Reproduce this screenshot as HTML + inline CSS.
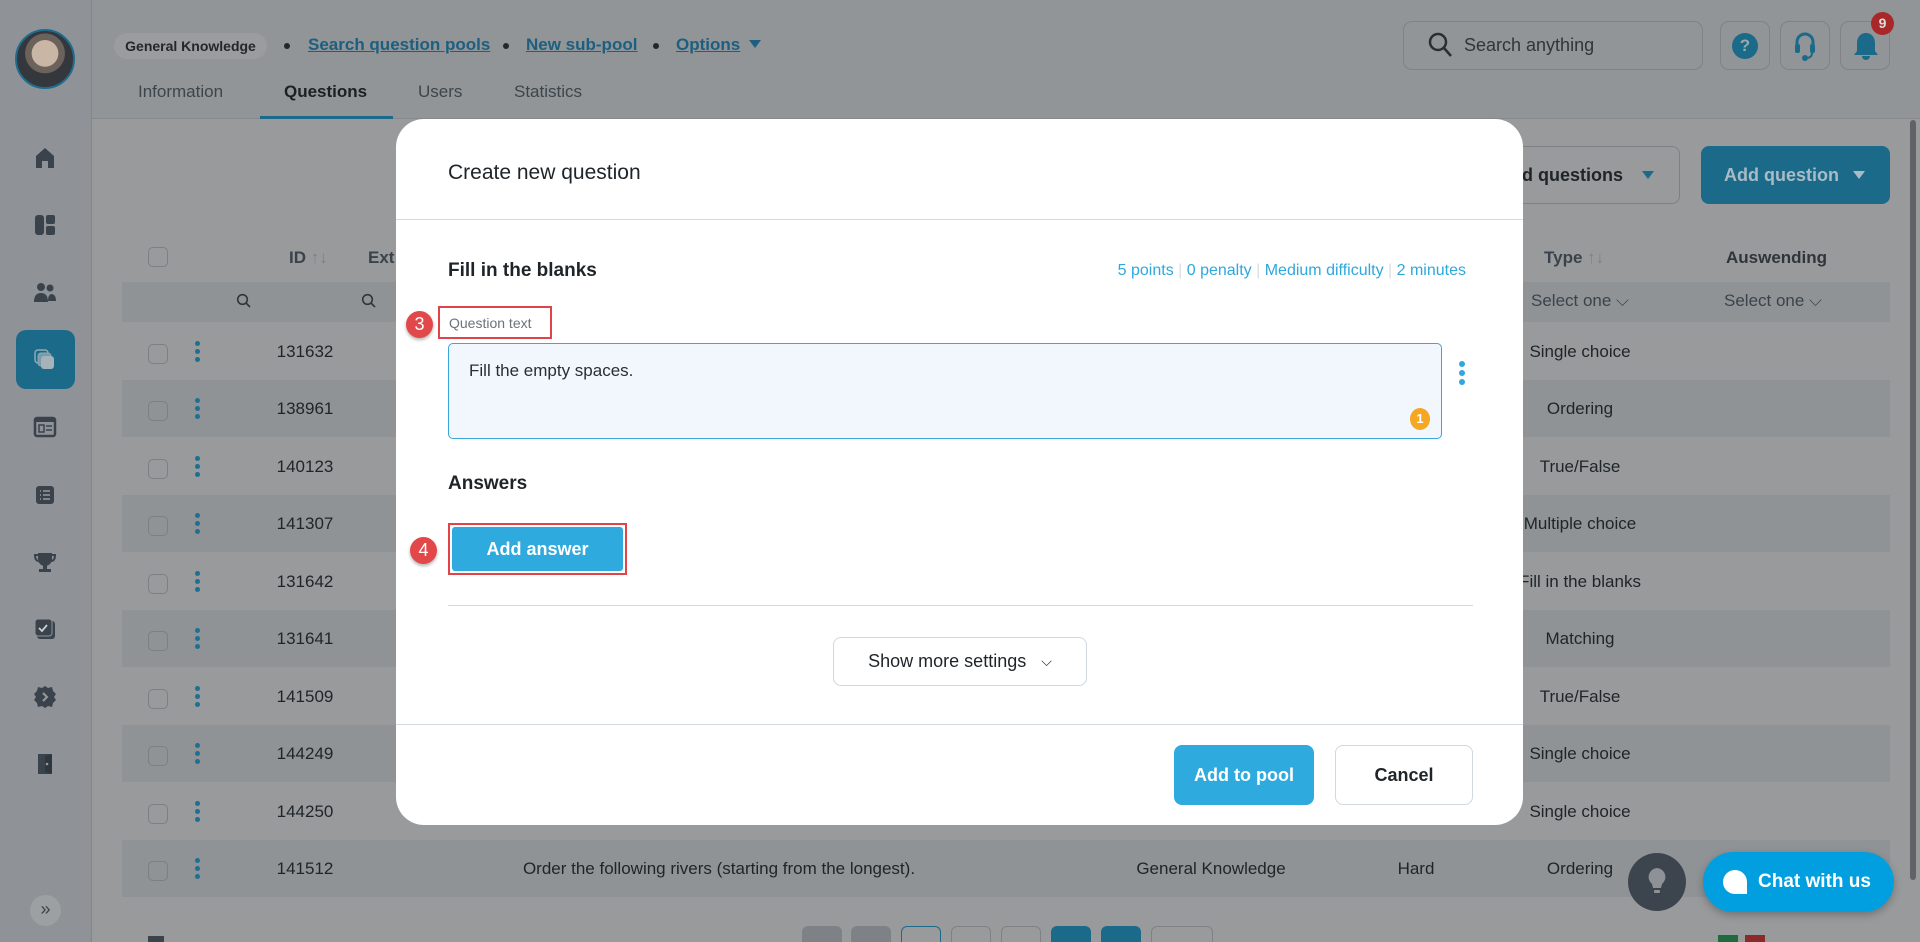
<!DOCTYPE html>
<html style="width:1920px;height:942px;overflow:hidden"><head><meta charset="utf-8">
<style>
*{box-sizing:border-box;margin:0;padding:0}
html,body{width:1920px;height:942px;overflow:hidden}
body{position:relative;background:#999a9b;font-family:"Liberation Sans",sans-serif;color:#1f2329}
.abs{position:absolute}
.hdr{left:0;top:0;width:1920px;height:119px;background:#919597;border-bottom:1px solid #85898c}
.side{left:0;top:0;width:92px;height:942px;background:#8f9397;border-right:1px solid #82868a}
.link{color:#1c5f80;text-decoration:underline;font-size:17px;font-weight:bold;top:35px}
.dot{width:6px;height:6px;border-radius:50%;background:#22272c;top:43px}
.tab{top:82px;font-size:17px;color:#3d454c}
.ib{width:50px;height:49px;border:1px solid #7f8388;border-radius:9px;top:21px}
.row{left:122px;width:1768px;height:57.5px}
.stripe{background:#8f9396}
.cb{width:20px;height:20px;border:1.5px solid #7b8085;border-radius:5px;left:148px}
.kb{left:195px;width:5px}
.kb i{display:block;width:5px;height:5px;border-radius:50%;background:#1d6f93;margin-bottom:3px}
.cell{font-size:17px;color:#1f2428;transform:translateX(-50%);white-space:nowrap}
.sic{left:33px;width:24px;height:24px}
.modal{left:396px;top:119px;width:1127px;height:706px;background:#fff;border-radius:28px}
.btn{border-radius:8px;font-size:18px;display:flex;align-items:center;justify-content:center}
.num{width:27px;height:27px;border-radius:50%;background:#e2474a;color:#fff;font-size:18px;display:flex;align-items:center;justify-content:center;box-shadow:0 2px 3px rgba(0,0,0,.3)}
.pg{top:926px;width:40px;height:16px;border-radius:6px 6px 0 0}
</style></head><body>
<div class="abs hdr"></div>
<div class="abs side"></div>

<div class="abs" style="left:15px;top:29px;width:60px;height:60px;border-radius:50%;border:2px solid #1f6d8e;background:radial-gradient(circle at 50% 40%,#c9b6a5 0 30%,#6b625c 31% 45%,#34383d 46%);"></div>

<div class="abs" style="left:114px;top:33px;width:153px;height:26px;border-radius:13px;background:#9a9c9e;font-size:14px;font-weight:bold;color:#22272b;display:flex;align-items:center;justify-content:center">General Knowledge</div>
<div class="abs dot" style="left:284px"></div>
<div class="abs link" style="left:308px">Search question pools</div>
<div class="abs dot" style="left:503px"></div>
<div class="abs link" style="left:526px">New sub-pool</div>
<div class="abs dot" style="left:653px"></div>
<div class="abs link" style="left:676px">Options</div>
<svg class="abs" style="left:749px;top:40px" width="12" height="9"><path d="M0 0h12L6 8z" fill="#1c5f80"/></svg>

<div class="abs tab" style="left:138px">Information</div>
<div class="abs tab" style="left:284px;color:#1b2025;font-weight:bold">Questions</div>
<div class="abs tab" style="left:418px">Users</div>
<div class="abs tab" style="left:514px">Statistics</div>
<div class="abs" style="left:260px;top:116px;width:133px;height:3px;background:#1b6a8a"></div>

<div class="abs" style="left:1403px;top:21px;width:300px;height:49px;border:1px solid #7f8388;border-radius:9px"></div>
<svg class="abs" style="left:1428px;top:32px" width="26" height="28"><circle cx="10" cy="10" r="8" fill="none" stroke="#2a2f34" stroke-width="2.5"/><path d="M16 16l7 8" stroke="#2a2f34" stroke-width="2.5"/></svg>
<div class="abs" style="left:1464px;top:35px;font-size:18px;color:#2f353a">Search anything</div>
<div class="abs ib" style="left:1720px"></div>
<div class="abs ib" style="left:1780px"></div>
<div class="abs ib" style="left:1840px"></div>
<div class="abs" style="left:1732px;top:33px;width:26px;height:26px;border-radius:50%;background:#1b6a8a;color:#9aa;font-weight:bold;font-size:17px;text-align:center;line-height:26px">?</div>
<svg class="abs" style="left:1793px;top:30px" width="24" height="32"><path d="M4 16v-4a8 8 0 0 1 16 0v4" fill="none" stroke="#1b6a8a" stroke-width="3"/><rect x="2" y="14" width="5" height="9" rx="2" fill="#1b6a8a"/><rect x="17" y="14" width="5" height="9" rx="2" fill="#1b6a8a"/><path d="M19 23q0 5-6 5" fill="none" stroke="#1b6a8a" stroke-width="2"/><circle cx="12" cy="28" r="3" fill="#1b6a8a"/></svg>
<svg class="abs" style="left:1853px;top:31px" width="26" height="30"><path d="M13 2c-6 0-9 5-9 10v8l-3 4h24l-3-4v-8c0-5-3-10-9-10z" fill="#1b6a8a"/><path d="M9 25a4 4 0 0 0 8 0z" fill="#1b6a8a"/></svg>
<div class="abs" style="left:1871px;top:12px;width:23px;height:23px;border-radius:50%;background:#a8282a;color:#ddd;font-size:14px;font-weight:bold;text-align:center;line-height:23px">9</div>

<svg class="abs sic" style="top:146px"><path d="M3 22V10l9-8 9 8v12h-6v-7h-6v7z" fill="#3a434c"/></svg>
<svg class="abs sic" style="top:213px"><rect x="2" y="2" width="9" height="20" rx="3" fill="#3a434c"/><rect x="13" y="2" width="9" height="9" rx="2" fill="#3a434c"/><rect x="13" y="13" width="9" height="9" rx="2" fill="#3a434c"/></svg>
<svg class="abs sic" style="top:281px"><circle cx="8" cy="6" r="4" fill="#3a434c"/><circle cx="17" cy="7" r="3.5" fill="#3a434c"/><path d="M1 21q0-9 7-9t7 9z" fill="#3a434c"/><path d="M15 20q0-6 3-7 5 0 5 7z" fill="#3a434c"/></svg>
<div class="abs" style="left:16px;top:330px;width:59px;height:59px;border-radius:10px;background:#1c6a8a"></div>
<svg class="abs sic" style="top:348px"><rect x="2" y="2" width="13" height="13" rx="3" fill="none" stroke="#8fa9b5" stroke-width="1.5"/><rect x="5" y="5" width="13" height="13" rx="3" fill="#7d9aa8" stroke="#8fa9b5"/><rect x="8" y="8" width="13" height="13" rx="3" fill="#a6b3ba"/></svg>
<svg class="abs sic" style="top:415px"><rect x="2" y="3" width="20" height="18" rx="2" fill="none" stroke="#3a434c" stroke-width="2.5"/><rect x="2" y="3" width="20" height="4" fill="#3a434c"/><rect x="6" y="10" width="5" height="7" fill="none" stroke="#3a434c" stroke-width="1.5"/><path d="M13 11h6M13 15h6" stroke="#3a434c" stroke-width="1.5"/></svg>
<svg class="abs sic" style="top:483px"><rect x="3" y="3" width="18" height="18" rx="3" fill="#3a434c"/><path d="M7 8h1M10 8h7M7 12h1M10 12h7M7 16h1M10 16h7" stroke="#999" stroke-width="1.5"/></svg>
<svg class="abs sic" style="top:550px"><path d="M5 3h14v6a7 7 0 0 1-14 0z" fill="#3a434c"/><path d="M5 5H2q0 6 4 6M19 5h3q0 6-4 6" fill="none" stroke="#3a434c" stroke-width="2"/><rect x="10" y="15" width="4" height="4" fill="#3a434c"/><rect x="6" y="19" width="12" height="3" fill="#3a434c"/></svg>
<svg class="abs sic" style="top:617px"><rect x="4" y="4" width="18" height="18" rx="3" fill="#3a434c"/><rect x="2" y="2" width="17" height="17" rx="3" fill="#3a434c" stroke="#8f9397"/><path d="M6 11l3 3 5-6" fill="none" stroke="#ccc" stroke-width="1.8"/></svg>
<svg class="abs sic" style="top:685px"><path d="M12 1l3 2 4-1 1 4 3 3-2 3 2 3-3 3-1 4-4-1-3 2-3-2-4 1-1-4-3-3 2-3-2-3 3-3 1-4 4 1z" fill="#3a434c"/><path d="M10 8l4 4-4 4" fill="none" stroke="#999" stroke-width="2"/></svg>
<svg class="abs sic" style="top:752px"><path d="M5 2h14v20H5z" fill="#3a434c"/><path d="M12 4l7-2v20l-7-2z" fill="#2f373e"/><circle cx="14" cy="12" r="1.3" fill="#999"/></svg>
<div class="abs" style="left:30px;top:895px;width:31px;height:31px;border-radius:50%;background:#9ca0a3;color:#3a434c;font-size:18px;text-align:center;line-height:29px">»</div>

<div class="abs btn" style="left:1480px;top:146px;width:200px;height:58px;border:1px solid #7d8186;font-weight:bold;color:#1f2428;justify-content:flex-end;padding-right:56px">ad questions</div>
<svg class="abs" style="left:1642px;top:171px" width="12" height="9"><path d="M0 0h12L6 8z" fill="#1c6a8a"/></svg>
<div class="abs btn" style="left:1701px;top:146px;width:189px;height:58px;background:#1c6a8a;color:#a9bcc5;font-weight:bold;justify-content:flex-start;padding-left:23px">Add question</div>
<svg class="abs" style="left:1853px;top:171px" width="12" height="9"><path d="M0 0h12L6 8z" fill="#a9bcc5"/></svg>

<div class="abs cb" style="top:247px"></div>
<div class="abs" style="left:289px;top:248px;font-size:17px;font-weight:bold;color:#3a434c">ID <span style="color:#7c8287;font-weight:normal">↑↓</span></div>
<div class="abs" style="left:368px;top:248px;font-size:17px;font-weight:bold;color:#3a434c">Ext</div>
<div class="abs" style="left:1544px;top:248px;font-size:17px;font-weight:bold;color:#3a434c">Type <span style="color:#7c8287;font-weight:normal">↑↓</span></div>
<div class="abs" style="left:1726px;top:248px;font-size:17px;font-weight:bold;color:#2f353a">Auswending</div>
<div class="abs row stripe" style="top:282px;height:40px"></div>
<svg class="abs" style="left:236px;top:293px" width="16" height="16"><circle cx="6.5" cy="6.5" r="4.8" fill="none" stroke="#2f353a" stroke-width="1.6"/><path d="M10 10l4 4" stroke="#2f353a" stroke-width="1.6"/></svg>
<svg class="abs" style="left:361px;top:293px" width="16" height="16"><circle cx="6.5" cy="6.5" r="4.8" fill="none" stroke="#2f353a" stroke-width="1.6"/><path d="M10 10l4 4" stroke="#2f353a" stroke-width="1.6"/></svg>
<div class="abs" style="left:1531px;top:291px;font-size:17px;color:#3a434c">Select one ⌵</div>
<div class="abs" style="left:1724px;top:291px;font-size:17px;color:#3a434c">Select one ⌵</div>

<div class="abs row stripe" style="top:379.5px"></div>
<div class="abs row stripe" style="top:494.5px"></div>
<div class="abs row stripe" style="top:609.5px"></div>
<div class="abs row stripe" style="top:724.5px"></div>
<div class="abs row stripe" style="top:839.5px"></div>

<div class="abs cb" style="top:344px"></div><div class="abs kb" style="top:341px"><i></i><i></i><i></i></div><div class="abs cell" style="left:305px;top:342px">131632</div><div class="abs cell" style="left:1580px;top:342px">Single choice</div>
<div class="abs cb" style="top:401px"></div><div class="abs kb" style="top:398px"><i></i><i></i><i></i></div><div class="abs cell" style="left:305px;top:399px">138961</div><div class="abs cell" style="left:1580px;top:399px">Ordering</div>
<div class="abs cb" style="top:459px"></div><div class="abs kb" style="top:456px"><i></i><i></i><i></i></div><div class="abs cell" style="left:305px;top:457px">140123</div><div class="abs cell" style="left:1580px;top:457px">True/False</div>
<div class="abs cb" style="top:516px"></div><div class="abs kb" style="top:513px"><i></i><i></i><i></i></div><div class="abs cell" style="left:305px;top:514px">141307</div><div class="abs cell" style="left:1580px;top:514px">Multiple choice</div>
<div class="abs cb" style="top:574px"></div><div class="abs kb" style="top:571px"><i></i><i></i><i></i></div><div class="abs cell" style="left:305px;top:572px">131642</div><div class="abs cell" style="left:1580px;top:572px">Fill in the blanks</div>
<div class="abs cb" style="top:631px"></div><div class="abs kb" style="top:628px"><i></i><i></i><i></i></div><div class="abs cell" style="left:305px;top:629px">131641</div><div class="abs cell" style="left:1580px;top:629px">Matching</div>
<div class="abs cb" style="top:689px"></div><div class="abs kb" style="top:686px"><i></i><i></i><i></i></div><div class="abs cell" style="left:305px;top:687px">141509</div><div class="abs cell" style="left:1580px;top:687px">True/False</div>
<div class="abs cb" style="top:746px"></div><div class="abs kb" style="top:743px"><i></i><i></i><i></i></div><div class="abs cell" style="left:305px;top:744px">144249</div><div class="abs cell" style="left:1580px;top:744px">Single choice</div>
<div class="abs cb" style="top:804px"></div><div class="abs kb" style="top:801px"><i></i><i></i><i></i></div><div class="abs cell" style="left:305px;top:802px">144250</div><div class="abs cell" style="left:1580px;top:802px">Single choice</div>
<div class="abs cb" style="top:861px"></div><div class="abs kb" style="top:858px"><i></i><i></i><i></i></div><div class="abs cell" style="left:305px;top:859px">141512</div>
<div class="abs cell" style="left:719px;top:859px">Order the following rivers (starting from the longest).</div>
<div class="abs cell" style="left:1211px;top:859px">General Knowledge</div>
<div class="abs cell" style="left:1416px;top:859px">Hard</div>
<div class="abs cell" style="left:1580px;top:859px">Ordering</div>

<div class="abs" style="left:148px;top:936px;width:16px;height:6px;background:#3a434c"></div>
<div class="abs pg" style="left:802px;background:#7e8286"></div>
<div class="abs pg" style="left:851px;background:#7e8286"></div>
<div class="abs pg" style="left:901px;border:1.5px solid #1c6a8a;border-bottom:0"></div>
<div class="abs pg" style="left:951px;border:1px solid #7e8286;border-bottom:0"></div>
<div class="abs pg" style="left:1001px;border:1px solid #7e8286;border-bottom:0"></div>
<div class="abs pg" style="left:1051px;background:#1c6a8a"></div>
<div class="abs pg" style="left:1101px;background:#1c6a8a"></div>
<div class="abs pg" style="left:1151px;width:62px;border:1px solid #7e8286;border-bottom:0"></div>
<div class="abs" style="left:1718px;top:935px;width:20px;height:7px;background:#1e6b3e"></div>
<div class="abs" style="left:1745px;top:935px;width:20px;height:7px;background:#8a2a2a"></div>

<div class="abs" style="left:1910px;top:120px;width:6px;height:760px;border-radius:3px;background:#5f6368"></div>

<div class="abs" style="left:1628px;top:853px;width:58px;height:58px;border-radius:50%;background:#3c454d"></div>
<svg class="abs" style="left:1645px;top:866px" width="24" height="32"><path d="M12 2a9 9 0 0 0-5 16l1 4h8l1-4a9 9 0 0 0-5-16z" fill="#8e9296"/><rect x="9" y="24" width="6" height="3" rx="1" fill="#8e9296"/></svg>
<div class="abs" style="left:1703px;top:852px;width:191px;height:60px;border-radius:30px;background:#029fe0;box-shadow:0 3px 8px rgba(0,0,0,.25)"></div>
<svg class="abs" style="left:1722px;top:869px" width="26" height="26"><path d="M13 1a12 12 0 0 1 12 12v12H13A12 12 0 0 1 13 1z" fill="#fff"/></svg>
<div class="abs" style="left:1758px;top:871px;font-size:19px;font-weight:bold;color:#fff">Chat with us</div>

<div class="abs modal"></div>
<div class="abs" style="left:448px;top:161px;font-size:21px;color:#1f2428">Create new question</div>
<div class="abs" style="left:396px;top:219px;width:1127px;height:1px;background:#d3dbe2"></div>
<div class="abs" style="left:448px;top:260px;font-size:19px;font-weight:bold;color:#1f2428">Fill in the blanks</div>
<div class="abs" style="left:1100px;top:262px;width:366px;font-size:16px;color:#2ea8db;text-align:right;white-space:nowrap">5 points <span style="color:#d8dde2">|</span> 0 penalty <span style="color:#d8dde2">|</span> Medium difficulty <span style="color:#d8dde2">|</span> 2 minutes</div>
<div class="abs" style="left:438px;top:306px;width:114px;height:33px;border:2.5px solid #e0434a"></div>
<div class="abs" style="left:449px;top:315px;font-size:14px;color:#6b737b">Question text</div>
<div class="abs num" style="left:406px;top:311px">3</div>
<div class="abs" style="left:448px;top:343px;width:994px;height:96px;background:#f2f7fd;border:1.5px solid #3aa6da;border-radius:5px"></div>
<div class="abs" style="left:469px;top:361px;font-size:17px;color:#2a2f34">Fill the empty spaces.</div>
<div class="abs" style="left:1410px;top:408px;width:20px;height:22px;border-radius:50%;background:#f5a623;color:#fff;font-size:13px;font-weight:bold;text-align:center;line-height:22px">1</div>
<div class="abs kb" style="left:1459px;top:361px"><i style="background:#2fa7dc;width:6px;height:6px;margin-bottom:3px"></i><i style="background:#2fa7dc;width:6px;height:6px;margin-bottom:3px"></i><i style="background:#2fa7dc;width:6px;height:6px"></i></div>
<div class="abs" style="left:448px;top:473px;font-size:19px;font-weight:bold;color:#1f2428">Answers</div>
<div class="abs" style="left:448px;top:523px;width:179px;height:52px;border:2.5px solid #e0434a;padding:2px"><div style="width:100%;height:100%;background:#2eaade;border-radius:3px;color:#fff;font-size:18px;font-weight:bold;display:flex;align-items:center;justify-content:center">Add answer</div></div>
<div class="abs num" style="left:410px;top:537px">4</div>
<div class="abs" style="left:448px;top:605px;width:1025px;height:1px;background:#d3dbe2"></div>
<div class="abs btn" style="left:833px;top:637px;width:254px;height:49px;border:1px solid #d0d7de;color:#1f2428">Show more settings&nbsp;&nbsp;&nbsp;<span style="font-size:14px">⌵</span></div>
<div class="abs" style="left:396px;top:724px;width:1127px;height:1px;background:#d3dbe2"></div>
<div class="abs btn" style="left:1174px;top:745px;width:140px;height:60px;background:#2eaade;color:#fff;font-weight:bold">Add to pool</div>
<div class="abs btn" style="left:1335px;top:745px;width:138px;height:60px;border:1px solid #d0d7de;color:#1f2428;font-weight:bold">Cancel</div>
</body></html>
